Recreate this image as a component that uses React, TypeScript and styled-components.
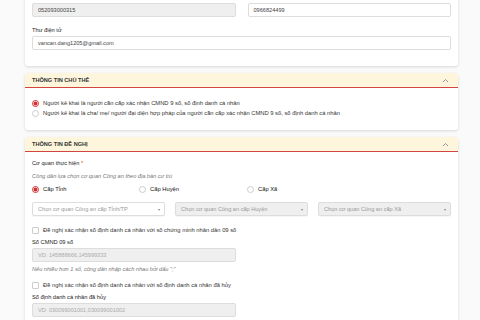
import React from 'react'
import styled, { createGlobalStyle } from 'styled-components'

const Global = createGlobalStyle`
  body {
    margin: 0;
    background: #fafafa;
    font-family: "Liberation Sans", Arial, sans-serif;
    color: #333;
  }
  * { box-sizing: border-box; }
`

const App = () => {
  return (
    <Page>
      <Global />
      <Card $pad="7px 7px 16px">
        <Grid2>
          <Field>
            <Label>Số định danh cá nhân</Label>
            <Input $disabled>052093000315</Input>
          </Field>
          <Field>
            <Label>Số điện thoại</Label>
            <Input>0966824499</Input>
          </Field>
        </Grid2>
        <Field $mt={9}>
          <Label>Thư điện tử</Label>
          <Input>vancan.dang1205@gmail.com</Input>
        </Field>
      </Card>

      <Card>
        <Header>
          <span>Thông tin chủ thể</span>
          <Chevron />
        </Header>
        <Body $pad="10px 7px 12px">
          <RadioLine>
            <Radio $checked />
            Người kê khai là người cần cấp xác nhận CMND 9 số, số định danh cá nhân
          </RadioLine>
          <RadioLine>
            <Radio />
            Người kê khai là cha/ mẹ/ người đại diện hợp pháp của người cần cấp xác nhận CMND 9 số, số định danh cá nhân
          </RadioLine>
        </Body>
      </Card>

      <Card>
        <Header>
          <span>Thông tin đề nghị</span>
          <Chevron />
        </Header>
        <Body $pad="7px 7px 20px">
          <Label>
            Cơ quan thực hiện <Req>*</Req>
          </Label>
          <Hint $mt={3}>Công dân lựa chọn cơ quan Công an theo địa bàn cư trú</Hint>
          <LevelRow>
            <RadioLine $strong>
              <Radio $checked />
              Cấp Tỉnh
            </RadioLine>
            <RadioLine $strong>
              <Radio />
              Cấp Huyện
            </RadioLine>
            <RadioLine $strong>
              <Radio />
              Cấp Xã
            </RadioLine>
          </LevelRow>
          <Grid3>
            <Select>Chọn cơ quan Công an cấp Tỉnh/TP</Select>
            <Select $disabled>Chọn cơ quan Công an cấp Huyện</Select>
            <Select $disabled>Chọn cơ quan Công an cấp Xã</Select>
          </Grid3>

          <CheckLine $mt={9}>
            <Check />
            Đề nghị xác nhận số định danh cá nhân với số chứng minh nhân dân 09 số
          </CheckLine>
          <Half $mt={3}>
            <Label>Số CMND 09 số</Label>
            <Input $disabled $placeholder>VD: 145888666,145999333</Input>
          </Half>
          <Hint $mt={3}>Nếu nhiều hơn 1 số, công dân nhập cách nhau bởi dấu ";"</Hint>

          <CheckLine $mt={7}>
            <Check />
            Đề nghị xác nhận số định danh cá nhân với số định danh cá nhân đã hủy
          </CheckLine>
          <Half $mt={3}>
            <Label>Số định danh cá nhân đã hủy</Label>
            <Input $disabled $placeholder>VD: 030099001001,030099001002</Input>
          </Half>
          <Hint $mt={3}>Nếu nhiều hơn 1 số, công dân nhập cách nhau bởi dấu ";"</Hint>
        </Body>
      </Card>
    </Page>
  )
}

const Chevron = () => (
  <svg width="7" height="5" viewBox="0 0 7 5">
    <path d="M1 4 L3.5 1.5 L6 4" fill="none" stroke="#888" strokeWidth="0.9" />
  </svg>
)

export default App

const Page = styled.div`
  margin-top: -14px;
  padding: 0 22px 0 25px;
  display: flex;
  flex-direction: column;
  gap: 7px;
`
const Card = styled.div<{ $pad?: string }>`
  background: #fff;
  border-radius: 3px;
  box-shadow: 0 1px 3px rgba(0, 0, 0, 0.14);
  padding: ${(p) => p.$pad || '0'};
  overflow: hidden;
`
const Header = styled.div`
  height: 15px;
  background: #fdf6dc;
  border-bottom: 1px solid #d0453f;
  padding: 0 9px 0 7px;
  display: flex;
  align-items: center;
  justify-content: space-between;
  font-size: 5.6px;
  font-weight: bold;
  text-transform: uppercase;
  color: #333;
`
const Body = styled.div<{ $pad: string }>`
  padding: ${(p) => p.$pad};
  display: flex;
  flex-direction: column;
`
const Grid2 = styled.div`
  display: grid;
  grid-template-columns: 1fr 1fr;
  gap: 12px;
`
const Grid3 = styled.div`
  margin-top: 8px;
  display: grid;
  grid-template-columns: 1fr 1fr 1fr;
  gap: 10px;
`
const Field = styled.div<{ $mt?: number }>`
  margin-top: ${(p) => p.$mt || 0}px;
  display: flex;
  flex-direction: column;
`
const Half = styled(Field)`
  width: 204px;
`
const Label = styled.div`
  height: 8px;
  line-height: 8px;
  font-size: 5.7px;
  color: #222;
  margin-bottom: 2px;
`
const Req = styled.span`
  color: #e53935;
`
const Input = styled.div<{ $disabled?: boolean; $placeholder?: boolean }>`
  height: 14px;
  border: 1px solid #ddd;
  border-radius: 2px;
  background: ${(p) => (p.$disabled ? '#efefef' : '#fff')};
  color: ${(p) => (p.$placeholder ? '#aaa' : '#444')};
  font-size: 5.6px;
  display: flex;
  align-items: center;
  padding-left: 5px;
`
const Select = styled(Input)`
  color: #999;
  justify-content: space-between;
  padding: 0 4px 0 5px;
  box-shadow: 0 1px 1px rgba(0, 0, 0, 0.04);
  &::after {
    content: '▾';
    font-size: 4px;
    color: #888;
  }
`
const Hint = styled.div<{ $mt?: number }>`
  margin-top: ${(p) => p.$mt || 0}px;
  height: 8px;
  line-height: 8px;
  font-size: 5.6px;
  font-style: italic;
  color: #777;
`
const RadioLine = styled.label<{ $strong?: boolean }>`
  height: 10px;
  display: flex;
  align-items: center;
  gap: 4px;
  font-size: 5.8px;
  color: ${(p) => (p.$strong ? '#111' : '#333')};
  white-space: nowrap;
`
const LevelRow = styled.div`
  margin-top: 4px;
  display: grid;
  grid-template-columns: 107px 108px 107px;
`
const Radio = styled.span<{ $checked?: boolean }>`
  width: 7px;
  height: 7px;
  border-radius: 50%;
  flex-shrink: 0;
  border: 1px solid ${(p) => (p.$checked ? '#d32f2f' : '#ccc')};
  background: ${(p) =>
    p.$checked ? 'radial-gradient(circle, #d32f2f 0 1.8px, #fff 2.2px)' : '#fff'};
`
const CheckLine = styled.label<{ $mt?: number }>`
  margin-top: ${(p) => p.$mt || 0}px;
  height: 10px;
  display: flex;
  align-items: center;
  gap: 4px;
  font-size: 5.8px;
  color: #333;
`
const Check = styled.span`
  width: 7px;
  height: 7px;
  border: 1px solid #ccc;
  border-radius: 1px;
  background: #fff;
`
